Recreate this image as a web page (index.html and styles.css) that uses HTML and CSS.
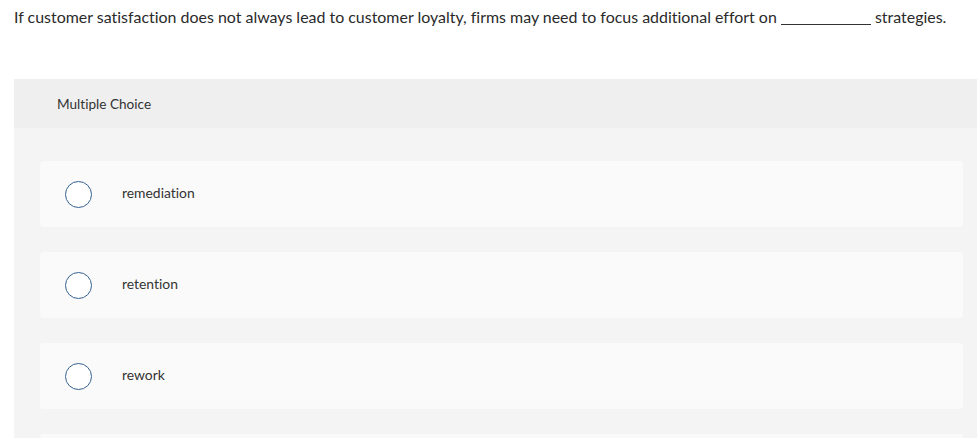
FILE: index.html
```html
<!DOCTYPE html>
<html>
<head>
<meta charset="utf-8">
<link rel="stylesheet" href="styles.css">
</head>
<body>
<div class="page">
  <p class="question">If customer satisfaction does not always lead to customer loyalty, firms may need to focus additional effort on <span class="blank"></span> strategies.</p>
  <section class="mc">
    <div class="mc-header">Multiple Choice</div>
    <div class="mc-body">
      <label class="option"><span class="radio"></span><span class="opt-text">remediation</span></label>
      <label class="option"><span class="radio"></span><span class="opt-text">retention</span></label>
      <label class="option"><span class="radio"></span><span class="opt-text">rework</span></label>
      <div class="option"></div>
    </div>
  </section>
</div>
</body>
</html>
```

FILE: styles.css
```css
html, body {
  margin: 0;
  padding: 0;
  background: #ffffff;
  overflow: hidden;
}
body {
  font-family: Lato, "Liberation Sans", sans-serif;
  font-variant-ligatures: none;
  color: #2a2a2a;
}
.page {
  padding: 0 0 0 14px;
}
.question {
  margin: 0;
  padding-top: 7px;
  font-size: 15.95px;
  line-height: 20px;
  color: #2a2a2a;
}
.blank {
  display: inline-block;
  width: 90px;
  border-bottom: 1px solid #333;
  vertical-align: -2px;
  height: 1px;
}
.mc {
  margin-top: 52px;
  background: #f4f4f4;
}
.mc-header {
  background: #efefef;
  height: 49px;
  display: flex;
  align-items: center;
  padding-left: 43px;
  font-size: 13.6px;
  color: #333;
}
.mc-body {
  padding: 33px 14px 0 26px;
  display: flex;
  flex-direction: column;
  gap: 25px;
}
.option {
  display: flex;
  align-items: center;
  height: 66px;
  background: #fafafa;
  border-radius: 4px;
  padding-left: 25px;
}
.radio {
  width: 25px;
  height: 25px;
  border: 1.5px solid #34618f;
  border-radius: 50%;
  background: #fff;
  flex: none;
}
.opt-text {
  margin-left: 30px;
  font-size: 13.9px;
  line-height: 18px;
  padding-bottom: 2px;
  color: #333;
}
```
